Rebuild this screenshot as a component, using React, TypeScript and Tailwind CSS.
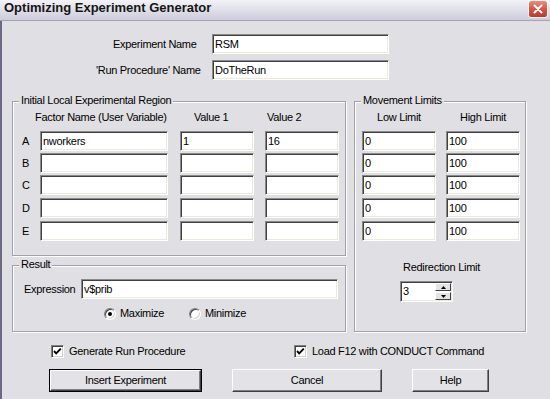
import React from "react";

function Field({ className, value }: { className: string; value?: string }) {
  return (
    <div
      className={`h-[20px] shrink-0 bg-white border border-t-[#8a8a8a] border-l-[#8a8a8a] border-b-white border-r-white shadow-[inset_1px_1px_0_#404040,inset_-1px_-1px_0_#ece9d8] flex items-center pl-[2px] overflow-hidden whitespace-nowrap ${className}`}
    >
      {value}
    </div>
  );
}

function Group({ className, legend, children }: { className: string; legend: string; children: React.ReactNode }) {
  return (
    <div
      className={`relative border border-[#a0a0a8] shadow-[1px_1px_0_#ffffff,inset_1px_1px_0_#ffffff] flex flex-col ${className}`}
    >
      <span className="absolute left-[6px] -top-[8px] px-[2px] bg-[#e0dfe3] leading-[13px]">{legend}</span>
      {children}
    </div>
  );
}

function Check() {
  return (
    <div className="w-[13px] h-[13px] shrink-0 bg-white border border-t-[#808080] border-l-[#808080] border-b-white border-r-white shadow-[inset_1px_1px_0_#404040,inset_-1px_-1px_0_#d4d0c8] flex items-center justify-center">
      <svg width="11" height="11" viewBox="0 0 11 11">
        <polyline points="2,5 4.2,7.3 8.8,2.6" fill="none" stroke="#000" strokeWidth="1.9" />
      </svg>
    </div>
  );
}

function Radio({ on }: { on?: boolean }) {
  return (
    <div className="w-[12px] h-[12px] shrink-0 rounded-full bg-white border border-t-[#808080] border-l-[#808080] border-b-white border-r-white shadow-[inset_1px_1px_0_#404040,inset_-1px_-1px_0_#d4d0c8] flex items-center justify-center">
      {on ? <div className="w-[4px] h-[4px] rounded-full bg-black" /> : null}
    </div>
  );
}

function Btn({ className, label, def }: { className: string; label: string; def?: boolean }) {
  const inner = (
    <div className="h-full w-full flex items-center justify-center bg-[#e3e2e7] border border-t-white border-l-white border-b-[#404040] border-r-[#404040] shadow-[inset_-1px_-1px_0_#808080]">
      {label}
    </div>
  );
  return def ? (
    <div className={`h-[23px] shrink-0 border border-black ${className}`}>{inner}</div>
  ) : (
    <div className={`h-[23px] shrink-0 ${className}`}>{inner}</div>
  );
}

const rowMargins = ["", "mt-[2px]", "mt-[2px]", "mt-[3px]", "mt-[3px]"];
const letters = ["A", "B", "C", "D", "E"];

export default function App() {
  return (
    <div className="w-[550px] h-[399px] overflow-hidden bg-[#e0dfe3] flex flex-col font-['Liberation_Sans',Arial,sans-serif] text-[11px] leading-[13px] tracking-[-0.3px] text-black">
      {/* Title bar */}
      <div className="h-[20px] shrink-0 flex items-start justify-between bg-gradient-to-b from-[#f2f2f7] to-[#cdcddb] pl-[4px] pt-[1px]">
        <span className="font-bold text-[13px] leading-[13px] tracking-normal text-[#151515]">
          Optimizing Experiment Generator
        </span>
        <div className="w-[20px] h-[18px] -mt-[1px] mr-[2px] rounded-[3px] border border-white bg-gradient-to-b from-[#ec8d80] via-[#d65442] to-[#c0392b] flex items-center justify-center">
          <svg width="10" height="10" viewBox="0 0 10 10">
            <path d="M1.5 1.5 L8.5 8.5 M8.5 1.5 L1.5 8.5" stroke="#fff" strokeWidth="2" strokeLinecap="round" />
          </svg>
        </div>
      </div>
      <div className="h-px shrink-0 bg-[#a2a2b4]" />

      {/* Body */}
      <div className="flex-1 border-l-2 border-[#6a6a84] flex flex-col">
        <div className="flex items-center pt-[13px] pl-[111px]">
          <span className="w-[99px] shrink-0">Experiment Name</span>
          <Field className="w-[177px]" value="RSM" />
        </div>
        <div className="flex items-center mt-[6px] pl-[94px]">
          <span className="w-[116px] shrink-0">'Run Procedure' Name</span>
          <Field className="w-[177px]" value="DoTheRun" />
        </div>

        {/* Main area */}
        <div className="flex mt-[21px] pl-[10px] gap-[8px]">
          <div className="flex flex-col w-[334px] gap-[9px]">
            <Group className="h-[155px]" legend="Initial Local Experimental Region">
              <div className="flex pt-[9px] pl-[22px] h-[22px]">
                <span className="w-[159px] shrink-0">Factor Name (User Variable)</span>
                <span className="w-[73px] shrink-0">Value 1</span>
                <span>Value 2</span>
              </div>
              <div className="flex flex-col mt-[7px]">
                {letters.map((l, i) => (
                  <div key={l} className={`flex items-center pl-[9px] ${rowMargins[i]}`}>
                    <span className="w-[18px] shrink-0">{l}</span>
                    <Field className="w-[128px]" value={i === 0 ? "nworkers" : ""} />
                    <Field className="w-[74px] ml-[12px]" value={i === 0 ? "1" : ""} />
                    <Field className="w-[74px] ml-[11px]" value={i === 0 ? "16" : ""} />
                  </div>
                ))}
              </div>
            </Group>
            <Group className="h-[67px]" legend="Result">
              <div className="flex items-center pt-[13px] pl-[11px]">
                <span className="w-[57px] shrink-0">Expression</span>
                <Field className="w-[257px]" value="v$prib" />
              </div>
              <div className="flex items-center mt-[8px] pl-[91px]">
                <div className="flex items-center gap-[4px] w-[85px]">
                  <Radio on />
                  <span>Maximize</span>
                </div>
                <div className="flex items-center gap-[4px]">
                  <Radio />
                  <span>Minimize</span>
                </div>
              </div>
            </Group>
          </div>

          <Group className="w-[172px] h-[231px]" legend="Movement Limits">
            <div className="grid grid-cols-[74px_74px] gap-x-[10px] pt-[9px] pl-[7px] h-[22px]">
              <span className="text-center">Low Limit</span>
              <span className="text-center">High Limit</span>
            </div>
            <div className="flex flex-col mt-[7px]">
              {letters.map((l, i) => (
                <div key={l} className={`flex items-center pl-[7px] ${rowMargins[i]}`}>
                  <Field className="w-[74px]" value="0" />
                  <Field className="w-[74px] ml-[10px]" value="100" />
                </div>
              ))}
            </div>
            <div className="mt-[20px] text-center pl-[3px]">Redirection Limit</div>
            <div className="mt-[7px] pl-[45px] flex">
              <div className="w-[53px] h-[21px] bg-white border border-t-[#8a8a8a] border-l-[#8a8a8a] border-b-white border-r-white shadow-[inset_1px_1px_0_#404040,inset_-1px_-1px_0_#ece9d8] flex items-stretch">
                <div className="flex-1 flex items-center pl-[2px]">3</div>
                <div className="w-[17px] flex flex-col gap-[1px] py-[1px] pr-[1px]">
                  <div className="flex-1 bg-[#e3e2e7] border border-t-white border-l-white border-b-[#404040] border-r-[#404040] flex items-center justify-center">
                    <svg width="5" height="3" viewBox="0 0 5 3">
                      <path d="M2.5 0 L5 3 L0 3 Z" fill="#000" />
                    </svg>
                  </div>
                  <div className="flex-1 bg-[#e3e2e7] border border-t-white border-l-white border-b-[#404040] border-r-[#404040] flex items-center justify-center">
                    <svg width="5" height="3" viewBox="0 0 5 3">
                      <path d="M0 0 L5 0 L2.5 3 Z" fill="#000" />
                    </svg>
                  </div>
                </div>
              </div>
            </div>
          </Group>
        </div>

        {/* Checkboxes */}
        <div className="flex items-center mt-[13px] pl-[49px]">
          <div className="flex items-center gap-[5px] w-[243px]">
            <Check />
            <span>Generate Run Procedure</span>
          </div>
          <div className="flex items-center gap-[5px]">
            <Check />
            <span>Load F12 with CONDUCT Command</span>
          </div>
        </div>

        {/* Buttons */}
        <div className="flex mt-[11px] pl-[47px]">
          <Btn className="w-[153px]" label="Insert Experiment" def />
          <Btn className="w-[150px] ml-[30px]" label="Cancel" />
          <Btn className="w-[77px] ml-[30px]" label="Help" />
        </div>
      </div>
    </div>
  );
}
